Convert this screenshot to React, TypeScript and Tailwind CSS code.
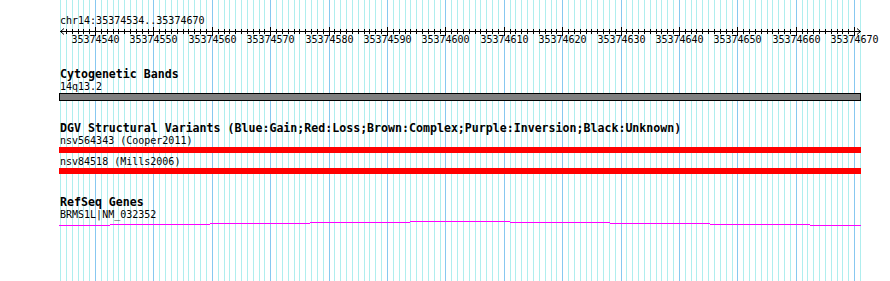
import React from "react";

const START = 35374534;
const N = 137;
const X0 = 60;
const SCALE = 800 / N;
const px = (i: number) => Math.round(X0 + i * SCALE);

function Grid() {
  const lines = [];
  for (let i = 0; i <= N; i++) {
    const bp = START + i;
    const major = bp % 10 === 0;
    const x = px(i) + 0.5;
    lines.push(
      <line key={i} x1={x} x2={x} y1={0} y2={281} stroke={major ? "#87c8f0" : "#afeeee"} strokeWidth={1} />
    );
  }
  return (
    <svg className="absolute left-0 top-0" width={890} height={281} shapeRendering="crispEdges">
      {lines}
    </svg>
  );
}

function Ruler() {
  const ticks = [];
  const labels = [];
  for (let i = 0; i <= N; i++) {
    const bp = START + i;
    const major = bp % 10 === 0;
    const x = px(i) + 0.5;
    if (i > 0 && i < N) {
      ticks.push(<line key={i} x1={x} x2={x} y1={major ? 0 : 2} y2={major ? 9 : 7} stroke="#000" strokeWidth={1} />);
    }
    if (major) {
      labels.push(
        <text
          key={"t" + i}
          x={px(i) + 0.5}
          y={16}
          textAnchor="middle"
          fontFamily="'DejaVu Sans Mono', monospace"
          fontSize={10}
          fill="#000"
        >
          {bp}
        </text>
      );
    }
  }
  return (
    <svg className="block" width={890} height={20}>
      <g shapeRendering="crispEdges">
        <line x1={60} x2={861} y1={4.5} y2={4.5} stroke="#000" strokeWidth={1} />
        {ticks}
      </g>
      <polyline points="64,1.5 60.5,4.5 64,7.5" fill="none" stroke="#000" strokeWidth={1} />
      <polyline points="857,1.5 860.5,4.5 857,7.5" fill="none" stroke="#000" strokeWidth={1} />
      {labels}
    </svg>
  );
}

function GeneLine() {
  const segs: [number, number, number][] = [
    [59, 110, 4],
    [110, 210, 3],
    [210, 310, 2],
    [310, 410, 1],
    [410, 510, 0],
    [510, 610, 1],
    [610, 710, 2],
    [710, 810, 3],
    [810, 861, 4],
  ];
  return (
    <svg className="block" width={890} height={5} shapeRendering="crispEdges">
      {segs.map(([a, b, y], k) => (
        <line key={k} x1={a} x2={b} y1={y + 0.5} y2={y + 0.5} stroke="#ff00ff" strokeWidth={1} />
      ))}
    </svg>
  );
}

const normal = "pl-[60px] h-[13px] leading-[13px] text-[10px] text-black whitespace-pre";
const bold = "pl-[60px] h-[12px] leading-[13px] text-[11.6px] font-bold text-black whitespace-pre";

export default function App() {
  return (
    <div
      className="relative w-[890px] h-[281px] overflow-hidden bg-white"
      style={{ fontFamily: "'DejaVu Sans Mono', 'Liberation Mono', monospace" }}
    >
      <Grid />
      <div className="relative flex flex-col pt-[14px]">
        <div className={normal}>chr14:35374534..35374670</div>
        <Ruler />
        <div className={bold + " mt-[21px]"}>Cytogenetic Bands</div>
        <div className={normal}>14q13.2</div>
        <div className="ml-[59px] w-[802px] h-[8px] border border-black bg-[#808080]" />
        <div className={bold + " mt-[21px]"}>
          DGV Structural Variants (Blue:Gain;Red:Loss;Brown:Complex;Purple:Inversion;Black:Unknown)
        </div>
        <div className={normal}>nsv564343 (Cooper2011)</div>
        <div className="ml-[59px] w-[802px] h-[6px] bg-[#ff0000]" />
        <div className={normal + " mt-[2px]"}>nsv84518 (Mills2006)</div>
        <div className="ml-[59px] w-[802px] h-[6px] bg-[#ff0000]" />
        <div className={bold + " mt-[22px]"}>RefSeq Genes</div>
        <div className={normal}>BRMS1L|NM_032352</div>
        <GeneLine />
      </div>
    </div>
  );
}
